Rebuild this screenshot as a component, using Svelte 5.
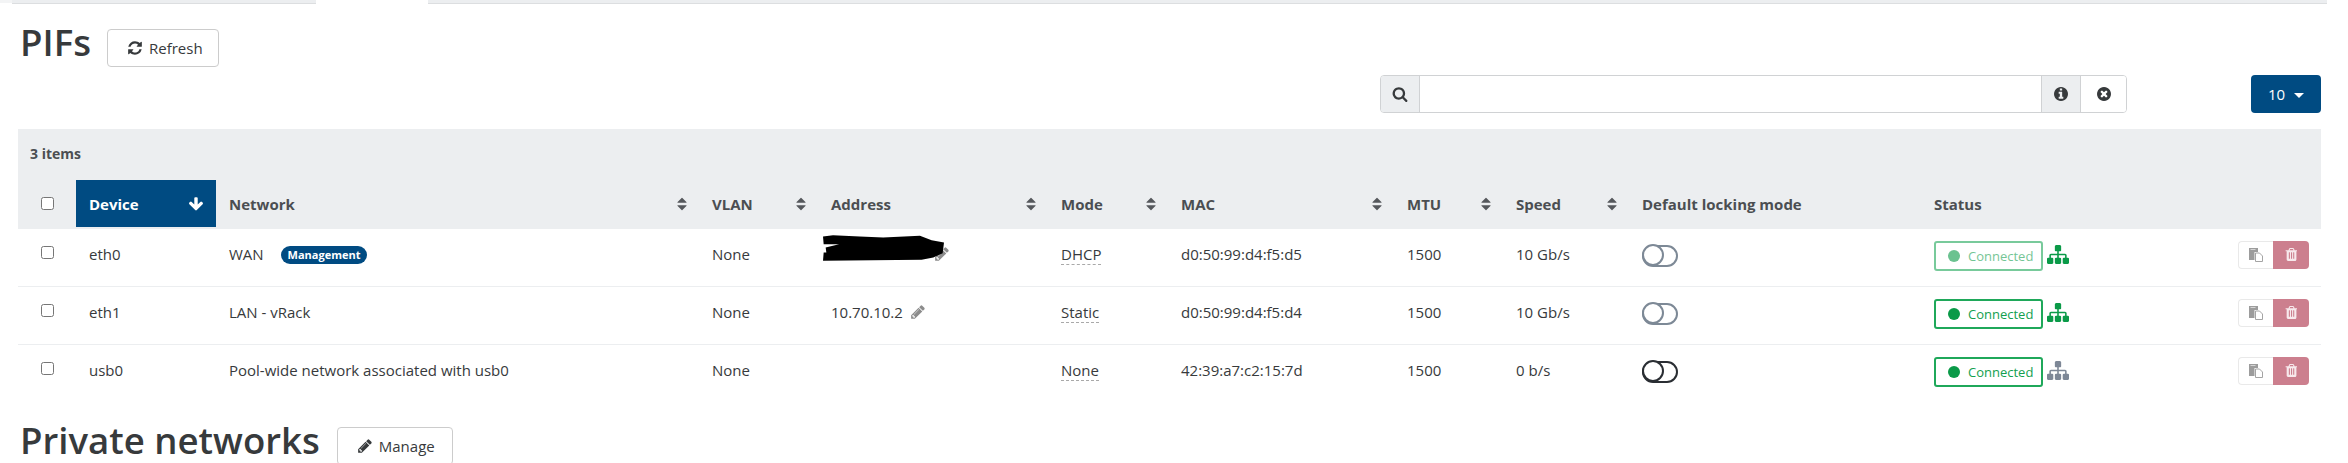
<script lang="ts">
	const columns = [
		{ label: 'Network', width: 483, sort: true },
		{ label: 'VLAN', width: 119, sort: true },
		{ label: 'Address', width: 230, sort: true },
		{ label: 'Mode', width: 120, sort: true },
		{ label: 'MAC', width: 226, sort: true },
		{ label: 'MTU', width: 109, sort: true },
		{ label: 'Speed', width: 126, sort: true },
		{ label: 'Default locking mode', width: 292, sort: false },
		{ label: 'Status', width: 400, sort: false }
	];

	const rows = [
		{ device: 'eth0', network: 'WAN', management: true, address: '', hidden: true, mode: 'DHCP', mac: 'd0:50:99:d4:f5:d5', speed: '10 Gb/s', locked: false, faded: true, linked: true },
		{ device: 'eth1', network: 'LAN - vRack', management: false, address: '10.70.10.2', hidden: false, mode: 'Static', mac: 'd0:50:99:d4:f5:d4', speed: '10 Gb/s', locked: false, faded: false, linked: true },
		{ device: 'usb0', network: 'Pool-wide network associated with usb0', management: false, address: '', hidden: false, mode: 'None', mac: '42:39:a7:c2:15:7d', speed: '0 b/s', locked: true, faded: false, linked: false }
	];

	const icons = {
		pencil: 'M491 1536l91-91-235-235-91 91v107h128v128h107zm523-928q0-22-22-22-10 0-17 7l-542 542q-7 7-7 17 0 22 22 22 10 0 17-7l542-542q7-7 7-17zm-54-192l416 416-832 832h-416v-416zm683 96q0 53-37 90l-166 166-416-416 166-165q36-38 90-38 53 0 91 38l235 234q37 39 37 91z',
		refresh: 'M1639 1056q0 5-1 7-64 268-268 434.500t-478 166.500q-146 0-282.500-55t-243.500-157l-129 129q-19 19-45 19t-45-19-19-45v-448q0-26 19-45t45-19h448q26 0 45 19t19 45-19 45l-137 137q71 66 161 102t187 36q134 0 250-65t186-179q11-17 53-117 8-23 30-23h192q13 0 22.500 9.500t9.500 22.500zm25-800v448q0 26-19 45t-45 19h-448q-26 0-45-19t-19-45 19-45l138-138q-148-137-349-137-134 0-250 65t-186 179q-11 17-53 117-8 23-30 23h-199q-13 0-22.500-9.500t-9.500-22.500v-7q65-268 270-434.500t480-166.500q146 0 284 55.500t245 156.500l130-129q19-19 45-19t45 19 19 45z',
		search: 'M1216 832q0-185-131.500-316.500t-316.500-131.500-316.500 131.500-131.500 316.500 131.500 316.500 316.500 131.500 316.500-131.500 131.500-316.500zm512 832q0 52-38 90t-90 38q-54 0-90-38l-343-342q-179 124-399 124-143 0-273.500-55.500t-225-150-150-225-55.500-273.500 55.500-273.500 150-225 225-150 273.500-55.500 273.500 55.500 225 150 150 225 55.500 273.500q0 220-124 399l343 343q37 37 37 90z',
		info: 'M1152 1376v-160q0-14-9-23t-23-9h-96v-512q0-14-9-23t-23-9h-320q-14 0-23 9t-9 23v160q0 14 9 23t23 9h96v320h-96q-14 0-23 9t-9 23v160q0 14 9 23t23 9h448q14 0 23-9t9-23zm-128-896v-160q0-14-9-23t-23-9h-192q-14 0-23 9t-9 23v160q0 14 9 23t23 9h192q14 0 23-9t9-23zm640 416q0 209-103 385.500t-279.500 279.500-385.500 103-385.500-103-279.500-279.500-103-385.500 103-385.500 279.500-279.500 385.500-103 385.500 103 279.500 279.500 103 385.500z',
		clear: 'M1277 1122q0-26-19-45l-181-181 181-181q19-19 19-45 0-27-19-46l-90-90q-19-19-46-19-26 0-45 19l-181 181-181-181q-19-19-45-19-27 0-46 19l-90 90q-19 19-19 46 0 26 19 45l181 181-181 181q-19 19-19 45 0 27 19 46l90 90q19 19 46 19 26 0 45-19l181-181 181 181q19 19 45 19 27 0 46-19l90-90q19-19 19-46zm387-226q0 209-103 385.500t-279.500 279.500-385.500 103-385.500-103-279.500-279.500-103-385.500 103-385.500 279.500-279.500 385.500-103 385.500 103 279.500 279.500 103 385.500z',
		arrow: 'M1675 832q0 53-37 90l-651 652q-39 37-91 37-53 0-90-37l-651-652q-38-36-38-90 0-53 38-91l74-75q39-37 91-37 53 0 90 37l294 294v-704q0-52 38-90t90-38h128q52 0 90 38t38 90v704l294-294q37-37 90-37 52 0 91 37l75 75q37 39 37 91z',
		sort: 'M1408 1088q0 26-19 45l-448 448q-19 19-45 19t-45-19l-448-448q-19-19-19-45t19-45 45-19h896q26 0 45 19t19 45zm0-384q0 26-19 45t-45 19h-896q-26 0-45-19t-19-45 19-45l448-448q19-19 45-19t45 19l448 448q19 19 19 45z',
		sitemap: 'M1792 1248v320q0 40-28 68t-68 28h-320q-40 0-68-28t-28-68v-320q0-40 28-68t68-28h96v-192h-512v192h96q40 0 68 28t28 68v320q0 40-28 68t-68 28h-320q-40 0-68-28t-28-68v-320q0-40 28-68t68-28h96v-192h-512v192h96q40 0 68 28t28 68v320q0 40-28 68t-68 28h-320q-40 0-68-28t-28-68v-320q0-40 28-68t68-28h96v-192q0-52 38-90t90-38h512v-192h-96q-40 0-68-28t-28-68v-320q0-40 28-68t68-28h320q40 0 68 28t28 68v320q0 40-28 68t-68 28h-96v192h512q52 0 90 38t38 90v192h96q40 0 68 28t28 68z',
		trash: 'M704 1376v-704q0-14-9-23t-23-9h-64q-14 0-23 9t-9 23v704q0 14 9 23t23 9h64q14 0 23-9t9-23zm256 0v-704q0-14-9-23t-23-9h-64q-14 0-23 9t-9 23v704q0 14 9 23t23 9h64q14 0 23-9t9-23zm256 0v-704q0-14-9-23t-23-9h-64q-14 0-23 9t-9 23v704q0 14 9 23t23 9h64q14 0 23-9t9-23zm-544-992h448l-48-117q-7-9-17-11h-317q-10 2-17 11zm928 32v64q0 14-9 23t-23 9h-96v948q0 83-47 143.500t-113 60.500h-832q-66 0-113-58.500t-47-141.500v-952h-96q-14 0-23-9t-9-23v-64q0-14 9-23t23-9h309l70-167q15-37 54-63t79-26h320q40 0 79 26t54 63l70 167h309q14 0 23 9t9 23z'
	};
</script>

{#snippet fa(d: string, cls: string, box = '0 0 1792 1792')}
	<svg class={cls} viewBox={box}><path {d} /></svg>
{/snippet}

<div class="tabs"><span class="edge"></span><span class="tab"></span><span class="gap"></span><span class="tab rest"></span></div>

<div class="page">
	<div class="heading first-heading">
		<h2>PIFs</h2>
		<button class="btn">
			{@render fa(icons.refresh, 'ic')}
			Refresh
		</button>
	</div>

	<div class="tools">
		<div class="search">
			<span class="addon first">{@render fa(icons.search, 'ic')}</span>
			<span class="field"></span>
			<span class="addon">{@render fa(icons.info, 'ic round', '128 128 1536 1536')}</span>
			<span class="clear">{@render fa(icons.clear, 'ic round', '128 128 1536 1536')}</span>
		</div>
		<button class="page-size">10<i class="caret"></i></button>
	</div>

	<table>
		<colgroup>
			<col style="width: 58px" />
			<col style="width: 140px" />
			{#each columns as col}
				<col style="width: {col.width}px" />
			{/each}
		</colgroup>
		<thead>
			<tr class="count"><th colspan="11">3 items</th></tr>
			<tr class="titles">
				<th class="check"><span class="box"></span></th>
				<th class="sorted">
					<span class="th-inner">Device {@render fa(icons.arrow, 'arrow')}</span>
				</th>
				{#each columns as col}
					<th>
						<span class="th-inner">{col.label}
							{#if col.sort}{@render fa(icons.sort, 'sort')}{/if}
						</span>
					</th>
				{/each}
			</tr>
		</thead>
		<tbody>
			{#each rows as row}
				<tr>
					<td class="check"><span class="box"></span></td>
					<td>{row.device}</td>
					<td>
						{row.network}
						{#if row.management}<span class="pill">Management</span>{/if}
					</td>
					<td>None</td>
					<td>
						{#if row.hidden}
							<span class="redacted">
								{@render fa(icons.pencil, 'under')}
								<svg viewBox="70 18 362 77" class="scribble"><path d="M70 22L100 18 180 22 250 25 360 20 395 33 432 40 428 72 400 85 365 92 70 95 72 70 80 70 78 55 118 45 72 45z" /></svg>
							</span>
						{:else if row.address}
							{row.address}
							{@render fa(icons.pencil, 'pen')}
						{/if}
					</td>
					<td><span class="mode">{row.mode}</span></td>
					<td>{row.mac}</td>
					<td>1500</td>
					<td>{row.speed}</td>
					<td class="plain">
						<span class="toggle" class:locked={row.locked}><i></i></span>
					</td>
					<td class="plain status">
						<div class="status-cell">
							<span class="badge" class:faded={row.faded}><i class="dot"></i>Connected</span>
							<svg viewBox="0 128 1792 1536" class="net" class:off={!row.linked}><path d={icons.sitemap} /></svg>
							<div class="actions">
								<span class="act copy">
									<svg viewBox="0 0 14 14">
										<path d="M0 0h9v4H5.500v8H0z" fill="#9c9c9c" />
										<path d="M1.500 1h5v.8h-5z" fill="#e4e4e4" />
										<path d="M6.500 5h4l3 3v5.500h-7z" fill="#fff" stroke="#a4a4a4" />
									</svg>
								</span>
								<span class="act trash">{@render fa(icons.trash, 'bin', '128 128 1408 1536')}</span>
							</div>
						</div>
					</td>
				</tr>
			{/each}
		</tbody>
	</table>

	<div class="heading second">
		<h2>Private networks</h2>
		<button class="btn">
			{@render fa(icons.pencil, 'ic')}
			Manage
		</button>
	</div>
</div>

<style>
	:global(body) {
		margin: 0;
		background: #fff;
		overflow: hidden;
	}

	.page, .tabs {
		font-family: 'Open Sans', sans-serif;
		font-size: 15px;
		color: #373a3c;
	}

	.tabs {
		display: flex;
		height: 4px;
		width: 2327px;
	}

	.edge {
		width: 12px;
		height: 3px;
		background: #f3f4f5;
	}

	.tab {
		width: 304px;
		background: #eceef0;
		border-bottom: 1px solid #dcdee0;
	}

	.gap {
		width: 112px;
	}

	.rest {
		flex: 1;
	}

	.page {
		width: 2303px;
		padding-left: 18px;
	}

	.heading {
		display: flex;
		align-items: flex-start;
		gap: 17px;
		height: 38px;
		margin-top: 25px;
	}

	.first-heading {
		gap: 16px;
	}

	h2 {
		margin: -5px 0 0 2px;
		font-size: 36.600px;
		font-weight: 600;
		line-height: 1;
		color: #373a3c;
	}

	.btn {
		display: inline-flex;
		align-items: center;
		gap: 6px;
		flex: none;
		box-sizing: border-box;
		height: 38px;
		padding: 0 15px 0 19px;
		background: #fff;
		border: 1px solid #ccc;
		border-radius: 4px;
		font: inherit;
		color: #373a3c;
	}

	.second .btn {
		padding-right: 17px;
	}

	.ic {
		width: 16px;
		height: 16px;
		fill: currentColor;
	}

	.ic.round {
		width: 14px;
		height: 14px;
	}

	.tools {
		display: flex;
		justify-content: flex-end;
		gap: 124px;
		margin-top: 8px;
	}

	.search {
		display: flex;
		width: 747px;
		height: 38px;
		box-sizing: border-box;
		border: 1px solid #d0d2d4;
		border-radius: 4px;
		overflow: hidden;
	}

	.addon, .clear {
		display: flex;
		align-items: center;
		justify-content: center;
		box-sizing: border-box;
		width: 39px;
		background: #eceef0;
		border-left: 1px solid #d0d2d4;
		color: #373a3c;
	}

	.addon.first {
		border-left: 0;
		border-right: 1px solid #d0d2d4;
	}

	.clear {
		width: 46px;
		background: #fff;
	}

	.field {
		flex: 1;
	}

	.page-size {
		width: 70px;
		height: 38px;
		background: #004b82;
		border: 0;
		border-radius: 4px;
		color: #fff;
		font: inherit;
	}

	.caret {
		display: inline-block;
		margin-left: 9px;
		vertical-align: 2px;
		border-top: 5px solid #fff;
		border-left: 5px solid transparent;
		border-right: 5px solid transparent;
	}

	table {
		table-layout: fixed;
		border-collapse: collapse;
		width: 2303px;
		margin-top: 16px;
	}

	thead {
		background: #eceef0;
	}

	th {
		padding: 0 13px;
		text-align: left;
		font-weight: 700;
		color: #4b4e52;
		font-size: 15px;
	}

	.count th {
		height: 49px;
		padding: 0 12px 2px;
		font-size: 14px;
	}

	.titles th {
		height: 47px;
		border-bottom: 2px solid #eceef0;
	}

	.titles th.sorted {
		background: #004b82;
		color: #fff;
	}

	.th-inner {
		display: flex;
		align-items: center;
		justify-content: space-between;
	}

	.arrow {
		width: 16px;
		height: 16px;
		fill: #fff;
		margin-right: -1px;
	}

	.sort {
		width: 16px;
		height: 16px;
		fill: #55585c;
		margin-right: -4px;
	}

	.titles th.check {
		padding: 0 0 0 23px;
	}

	.box {
		display: block;
		box-sizing: border-box;
		width: 13px;
		height: 13px;
		background: #fff;
		border: 1px solid #767676;
		border-radius: 2.500px;
	}

	tbody tr {
		height: 58px;
		border-bottom: 1px solid #eceef0;
	}

	tbody tr:last-child {
		border-bottom: 0;
	}

	td {
		padding: 0 13px 6px;
		vertical-align: middle;
		white-space: nowrap;
	}

	td.check {
		padding: 0 0 10px 23px;
	}

	td.plain {
		padding-bottom: 3px;
	}

	.pill {
		display: inline-block;
		margin-left: 13px;
		padding: 0 7px;
		height: 18px;
		line-height: 18px;
		background: #004b82;
		border-radius: 9px;
		color: #fff;
		font-size: 11px;
		font-weight: 700;
		vertical-align: 1px;
	}

	.redacted {
		position: relative;
		display: block;
		height: 20px;
	}

	.scribble {
		position: absolute;
		left: -8px;
		top: -9px;
		width: 121px;
		height: 26px;
		fill: #000;
	}

	.pen {
		width: 16px;
		height: 16px;
		margin-left: 3px;
		vertical-align: -2px;
		fill: #8c8c8c;
	}

	.under {
		position: absolute;
		left: 103px;
		top: 2px;
		width: 16px;
		height: 16px;
		fill: #8c8c8c;
	}

	.mode {
		display: inline-block;
		line-height: 20px;
		border-bottom: 1px dashed #a9a9a9;
	}

	.toggle {
		display: block;
		position: relative;
		box-sizing: border-box;
		width: 36px;
		height: 22px;
		border: 2.500px solid #7d8996;
		border-radius: 11px;
	}

	.toggle i {
		position: absolute;
		left: -2.500px;
		top: -2.500px;
		box-sizing: border-box;
		width: 22px;
		height: 22px;
		border: 2.500px solid #7d8996;
		border-radius: 50%;
		background: #fff;
	}

	.toggle.locked, .toggle.locked i {
		border-color: #2a2e33;
	}

	.status-cell {
		display: flex;
		align-items: flex-start;
		margin-right: -13px;
	}

	.badge {
		display: flex;
		align-items: center;
		box-sizing: border-box;
		width: 109px;
		height: 30px;
		padding-left: 12px;
		border: 2px solid #1fa85a;
		border-radius: 3px;
		color: #13a04f;
		font-size: 13px;
	}

	.badge.faded {
		opacity: 0.6;
	}

	.dot {
		width: 12px;
		height: 12px;
		margin-right: 8px;
		border-radius: 50%;
		background: #0a9a48;
	}

	.net {
		width: 22px;
		height: 19px;
		margin: 4px 0 0 4px;
		fill: #0a9a48;
	}

	.net.off {
		fill: #7d8796;
	}

	.actions {
		display: flex;
		margin-left: auto;
		margin-right: 12px;
		height: 28px;
	}

	.act {
		display: flex;
		align-items: center;
		justify-content: center;
		box-sizing: border-box;
		width: 35px;
	}

	.copy {
		border: 1px solid #e9e9e9;
		border-right: 0;
		border-radius: 4px 0 0 4px;
	}

	.copy svg {
		width: 14px;
		height: 14px;
	}

	.trash {
		width: 36px;
		background: #cc7f8e;
		border-radius: 0 4px 4px 0;
	}

	.act :global(.bin) {
		width: 12px;
		height: 13px;
		fill: #f7e9ec;
	}
</style>
